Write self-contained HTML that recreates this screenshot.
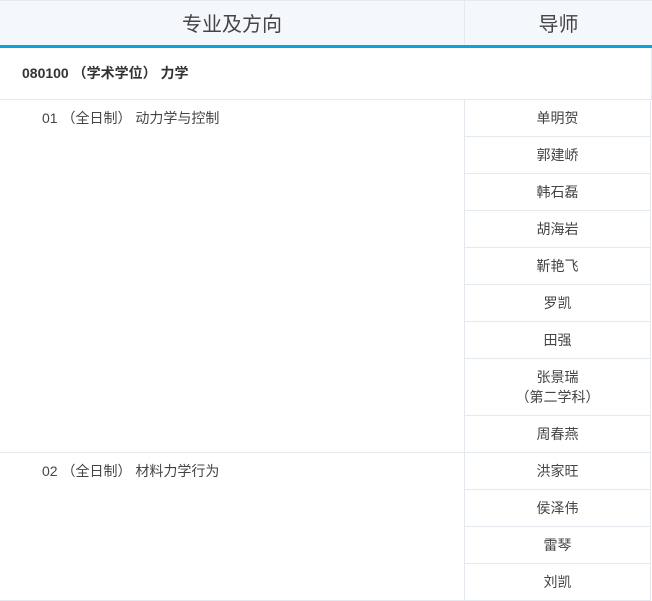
<!DOCTYPE html>
<html><head><meta charset="utf-8"><style>
body{margin:0;width:652px;height:601px;overflow:hidden;background:#fff;font-family:"Liberation Sans","Noto Sans CJK SC",sans-serif;color:#444;}
.a{position:absolute;box-sizing:border-box;}
.hd{background:#f4f7fc;font-size:20px;color:#444;text-align:center;line-height:48px;top:0;height:46px;border-top:1px solid #e3e9ef;}
.r{left:464px;width:187px;border-left:1px solid #e3e9ef;border-bottom:1px solid #e3e9ef;border-right:1px solid #e3e9ef;text-align:center;font-size:14px;line-height:37px;}
.l{left:0;width:464px;border-bottom:1px solid #e3e9ef;font-size:14px;padding-left:42px;line-height:37px;}
</style></head><body>
<div class="a hd" style="left:0;width:464px;">专业及方向</div>
<div class="a hd" style="left:464px;width:188px;border-left:1px solid #e3e9ef;">导师</div>
<div class="a" style="left:0;top:45px;width:652px;height:3px;background:#0aa3dc;"></div>
<div class="a" style="left:0;top:48px;width:652px;height:52px;border-bottom:1px solid #e3e9ef;border-right:1px solid #e3e9ef;font-size:14px;font-weight:bold;line-height:51px;padding-left:22px;color:#333;">080100 （学术学位） 力学</div>
<div class="a l" style="top:100px;height:353px;">01 （全日制） 动力学与控制</div>
<div class="a l" style="top:453px;height:148px;">02 （全日制） 材料力学行为</div>
<div class="a r" style="top:100px;height:37px;">单明贺</div>
<div class="a r" style="top:137px;height:37px;">郭建峤</div>
<div class="a r" style="top:174px;height:37px;">韩石磊</div>
<div class="a r" style="top:211px;height:37px;">胡海岩</div>
<div class="a r" style="top:248px;height:37px;">靳艳飞</div>
<div class="a r" style="top:285px;height:37px;">罗凯</div>
<div class="a r" style="top:322px;height:37px;">田强</div>
<div class="a r" style="top:359px;height:57px;line-height:20px;padding-top:8px;">张景瑞<br>（第二学科）</div>
<div class="a r" style="top:416px;height:37px;">周春燕</div>
<div class="a r" style="top:453px;height:37px;">洪家旺</div>
<div class="a r" style="top:490px;height:37px;">侯泽伟</div>
<div class="a r" style="top:527px;height:37px;">雷琴</div>
<div class="a r" style="top:564px;height:37px;">刘凯</div>
</body></html>
